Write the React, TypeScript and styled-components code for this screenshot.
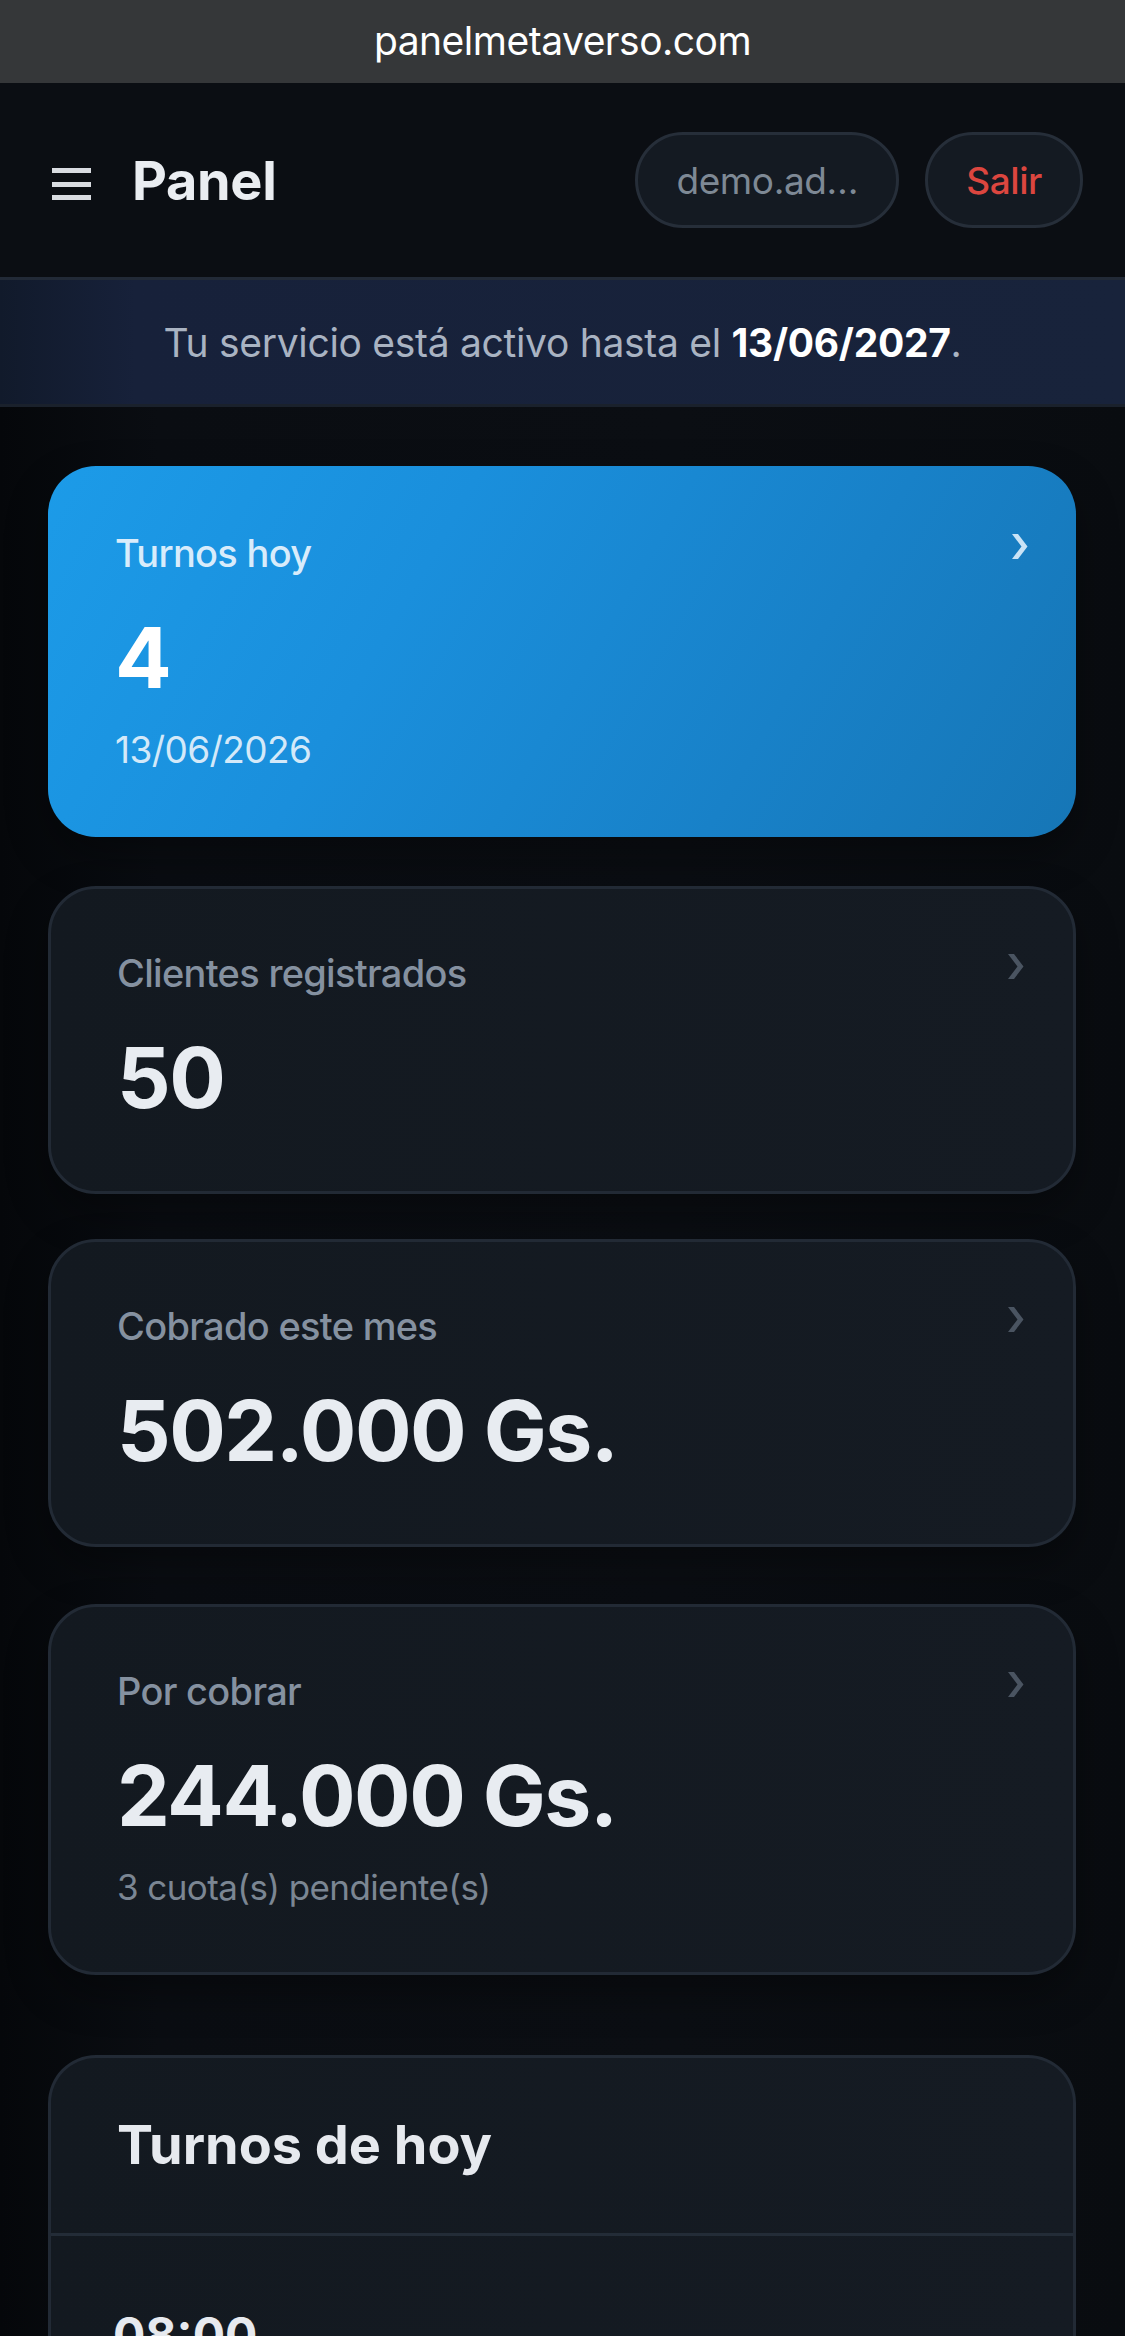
import styled, { createGlobalStyle } from "styled-components";

const GlobalStyle = createGlobalStyle`
  * { box-sizing: border-box; }
  html, body { margin: 0; padding: 0; background: #0a0d12; }
  body { font-family: "Inter", "Noto Sans", "Liberation Sans", sans-serif; -webkit-font-smoothing: antialiased; }
`;

interface Stat {
  label: string;
  value: string;
  sub?: string;
  primary?: boolean;
  spaceBefore: number;
}

const stats: Stat[] = [
  { label: "Turnos hoy", value: "4", sub: "13/06/2026", primary: true, spaceBefore: 0 },
  { label: "Clientes registrados", value: "50", spaceBefore: 49 },
  { label: "Cobrado este mes", value: "502.000 Gs.", spaceBefore: 45 },
  { label: "Por cobrar", value: "244.000 Gs.", sub: "3 cuota(s) pendiente(s)", spaceBefore: 57 },
];

function Chevron() {
  return (
    <svg width="16" height="25" viewBox="0 0 16 25">
      <polygon points="0,0 6,0 15.5,12.5 6,25 0,25 9.5,12.5" fill="currentColor" />
    </svg>
  );
}

function MenuIcon() {
  return (
    <svg width="39" height="33" viewBox="0 0 39 33">
      <rect x="0" y="0" width="39" height="5" fill="#d9dce1" />
      <rect x="0" y="14" width="39" height="5" fill="#d9dce1" />
      <rect x="0" y="27" width="39" height="5" fill="#d9dce1" />
    </svg>
  );
}

export default function App() {
  return (
    <>
      <GlobalStyle />
      <Page>
        <BrowserBar>panelmetaverso.com</BrowserBar>

        <Header>
          <Brand>
            <MenuButton aria-label="Menú">
              <MenuIcon />
            </MenuButton>
            <Title>Panel</Title>
          </Brand>
          <Actions>
            <Pill>demo.ad…</Pill>
            <Pill $danger>Salir</Pill>
          </Actions>
        </Header>

        <Banner>
          <p>
            Tu servicio está activo hasta el <strong>13/06/2027</strong>.
          </p>
        </Banner>

        <Main>
          {stats.map((s) => (
            <StatCard key={s.label} $primary={s.primary} $space={s.spaceBefore}>
              <StatHead>
                <StatLabel $primary={s.primary}>{s.label}</StatLabel>
                <ChevronWrap $primary={s.primary}>
                  <Chevron />
                </ChevronWrap>
              </StatHead>
              <StatValue $primary={s.primary}>{s.value}</StatValue>
              {s.sub && <StatSub $primary={s.primary}>{s.sub}</StatSub>}
            </StatCard>
          ))}

          <ListCard>
            <ListHead>Turnos de hoy</ListHead>
            <ListRow>
              <RowTime>08:00</RowTime>
            </ListRow>
          </ListCard>
        </Main>
      </Page>
    </>
  );
}

const Page = styled.div`
  min-height: 2336px;
  overflow: hidden;
  background: linear-gradient(90deg, #05070a 0%, #0a0d12 14%, #0b0e13 60%, #090c10 100%);
`;

const BrowserBar = styled.div`
  height: 83px;
  display: flex;
  align-items: center;
  justify-content: center;
  background: #353739;
  color: #ffffff;
  font-size: 39px;
  letter-spacing: -0.5px;
  padding-bottom: 2px;
`;

const Header = styled.header`
  height: 194px;
  display: flex;
  align-items: center;
  justify-content: space-between;
  padding: 0 42px 0 52px;
  background: #0b0e13;
`;

const Brand = styled.div`
  display: flex;
  align-items: center;
  gap: 41px;
`;

const MenuButton = styled.button`
  display: flex;
  padding: 0;
  margin-top: 8px;
  border: none;
  background: none;
`;

const Title = styled.h1`
  margin: 0;
  font-size: 54px;
  font-weight: 700;
  color: #eaedf1;
  letter-spacing: -0.3px;
`;

const Actions = styled.div`
  display: flex;
  gap: 26px;
`;

const Pill = styled.button<{ $danger?: boolean }>`
  height: 96px;
  padding: 0 38px;
  border-radius: 48px;
  border: 3px solid #262e39;
  background: #141a22;
  font-family: inherit;
  font-size: 37px;
  letter-spacing: -0.4px;
  font-weight: ${(p) => (p.$danger ? 500 : 400)};
  color: ${(p) => (p.$danger ? "#dc463f" : "#7e8995")};
  white-space: nowrap;
`;

const Banner = styled.div`
  height: 130px;
  display: flex;
  align-items: center;
  justify-content: center;
  border-top: 3px solid #222a37;
  border-bottom: 3px solid #1a212c;
  background: linear-gradient(90deg, #111a2b 0%, #17213a 12%, #18233b 100%);

  p {
    margin: 0;
    color: #a9b3c2;
    font-size: 39px;
    letter-spacing: -0.3px;
  }

  strong {
    color: #ffffff;
    font-weight: 700;
  }
`;

const Main = styled.main`
  padding: 59px 49px 0 48px;
`;

const StatCard = styled.section<{ $primary?: boolean; $space: number }>`
  margin-top: ${(p) => p.$space}px;
  padding: 57px 48px 63px ${(p) => (p.$primary ? 64 : 66)}px;
  border-radius: 48px;
  border: 3px solid ${(p) => (p.$primary ? "transparent" : "#222a35")};
  background: ${(p) =>
    p.$primary
      ? "linear-gradient(120deg, #1c9be8 0%, #1a8fdc 35%, #1881c8 70%, #1676b6 100%)"
      : "linear-gradient(90deg, #131920 0%, #151b23 100%)"};
  background-origin: border-box;
  box-shadow: 0 18px 40px rgba(0, 0, 0, 0.35);
`;

const StatHead = styled.div`
  display: flex;
  justify-content: space-between;
  align-items: flex-start;
`;

const StatLabel = styled.div<{ $primary?: boolean }>`
  font-size: 38px;
  line-height: 55px;
  font-weight: 500;
  letter-spacing: -0.7px;
  color: ${(p) => (p.$primary ? "#d8ecfb" : "#8591a0")};
`;

const ChevronWrap = styled.span<{ $primary?: boolean }>`
  display: flex;
  margin-top: 8px;
  margin-right: ${(p) => (p.$primary ? "-3px" : "1px")};
  color: ${(p) => (p.$primary ? "#c9e3f6" : "#4a5461")};
`;

const StatValue = styled.div<{ $primary?: boolean }>`
  margin-top: 26px;
  font-size: 84px;
  line-height: 101px;
  font-weight: 700;
  letter-spacing: -1.5px;
  color: ${(p) => (p.$primary ? "#ffffff" : "#e8ecf1")};
`;

const StatSub = styled.div<{ $primary?: boolean }>`
  margin-top: 20px;
  font-size: ${(p) => (p.$primary ? 37 : 35)}px;
  line-height: 43px;
  letter-spacing: -0.6px;
  color: ${(p) => (p.$primary ? "#d3e9f9" : "#7b8693")};
`;

const ListCard = styled.section`
  margin-top: 80px;
  border-radius: 48px 48px 0 0;
  border: 3px solid #222a35;
  border-bottom: none;
  background: linear-gradient(90deg, #131920 0%, #151b23 100%);
  overflow: hidden;
`;

const ListHead = styled.h2`
  margin: 0;
  padding: 55px 66px 56px;
  border-bottom: 3px solid #232c37;
  font-size: 54px;
  line-height: 64px;
  font-weight: 700;
  color: #e6e9ee;
`;

const ListRow = styled.div`
  padding: 70px 62px 40px;
`;

const RowTime = styled.div`
  font-size: 48px;
  line-height: 58px;
  font-weight: 700;
  color: #e6e9ee;
`;
